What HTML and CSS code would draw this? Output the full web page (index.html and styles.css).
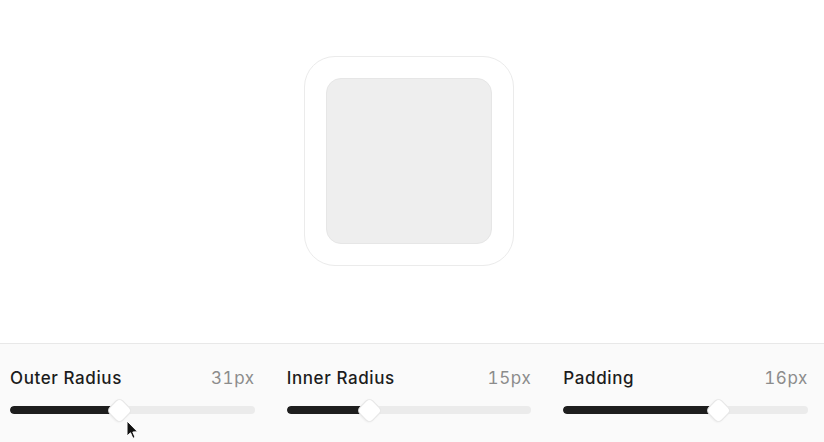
FILE: index.html
```html
<!DOCTYPE html>
<html>
<head>
<meta charset="utf-8">
<link rel="stylesheet" href="styles.css">
</head>
<body>
<div class="app">
  <div class="preview">
    <div class="outer">
      <div class="inner"></div>
    </div>
  </div>
  <div class="controls">
    <div class="control">
      <div class="head"><span class="label">Outer Radius</span><span class="value">31px</span></div>
      <div class="slider">
        <div class="track"><div class="fill" style="width:44.9%"></div></div>
        <div class="thumb" style="left:44.9%"></div>
      </div>
    </div>
    <div class="control">
      <div class="head"><span class="label">Inner Radius</span><span class="value">15px</span></div>
      <div class="slider">
        <div class="track"><div class="fill" style="width:34%"></div></div>
        <div class="thumb" style="left:34%"></div>
      </div>
    </div>
    <div class="control">
      <div class="head"><span class="label">Padding</span><span class="value">16px</span></div>
      <div class="slider">
        <div class="track"><div class="fill" style="width:63.3%"></div></div>
        <div class="thumb" style="left:63.3%"></div>
      </div>
    </div>
  </div>
  <svg class="cursor" width="13" height="20" viewBox="0 0 13 20">
    <path d="M1 1 L1 16 L4.5 12.8 L6.9 18.3 L9.1 17.4 L6.8 12 L11.6 11.8 Z" fill="#111" stroke="#fff" stroke-width="1" stroke-linejoin="round"/>
  </svg>
</div>
</body>
</html>
```

FILE: styles.css
```css
* { box-sizing: border-box; }
html, body { margin: 0; padding: 0; background: #fff; }
body { font-family: Inter, "Noto Sans", sans-serif; width: 824px; height: 442px; overflow: hidden; }
.app { position: relative; width: 824px; height: 442px; display: flex; flex-direction: column; }
.preview {
  height: 343px;
  display: flex;
  justify-content: center;
  align-items: flex-start;
  padding-top: 56px;
  padding-right: 6px;
}
.outer {
  width: 210px;
  height: 210px;
  border: 1px solid #ebebeb;
  border-radius: 31px;
  padding: 21px;
  background: #fff;
}
.inner {
  width: 100%;
  height: 100%;
  background: #eeeeee;
  border: 1px solid #e6e6e6;
  border-radius: 15px;
}
.controls {
  flex: 1;
  background: #fafafa;
  border-top: 1px solid #e8e8e8;
  display: flex;
  gap: 32px;
  padding: 23px 16px 0 10px;
}
.control { width: 245px; display: flex; flex-direction: column; gap: 8px; }
.head { display: flex; justify-content: space-between; align-items: center; height: 22px; }
.label { font-size: 17px; font-weight: 500; color: #1c1c1c; letter-spacing: 0.6px; }
.value { font-size: 17px; color: #8c8c8c; letter-spacing: 0.6px; font-variant-numeric: tabular-nums; }
.slider { position: relative; height: 26px; display: flex; align-items: center; }
.track { width: 100%; height: 8px; background: #ebebeb; border-radius: 4px; overflow: hidden; }
.fill { height: 100%; background: #1e1e1e; border-radius: 4px 0 0 4px; }
.thumb {
  position: absolute;
  top: 50%;
  width: 19px;
  height: 19px;
  margin-left: -9.5px;
  margin-top: -9.5px;
  background: #fff;
  border: 1px solid #e6e6e6;
  border-radius: 5px;
  transform: rotate(45deg);
  box-shadow: 0 1px 2px rgba(0,0,0,0.06);
}
.cursor { position: absolute; left: 126px; top: 420px; }
```
